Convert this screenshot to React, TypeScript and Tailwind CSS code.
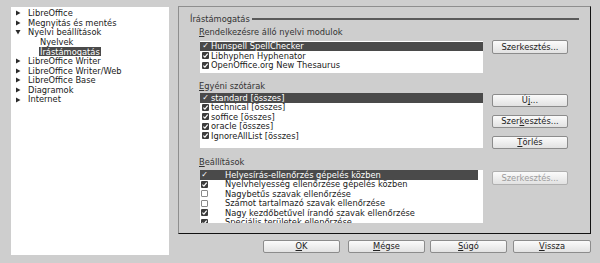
import React from "react";

function Tri({ open }: { open?: boolean }) {
  return (
    <svg width="6" height="6" viewBox="0 0 6 6" className="shrink-0">
      {open ? <polygon points="0.5,1 5.5,1 3,5.5" fill="#2a2a2a" /> : <polygon points="1,0.5 5.5,3 1,5.5" fill="#2a2a2a" />}
    </svg>
  );
}

function Box({ checked }: { checked: boolean }) {
  if (!checked) return <div className="w-[7px] h-[7px] shrink-0 border border-[#8a8a8a] bg-white rounded-[1px]" />;
  return (
    <svg width="7" height="7" viewBox="0 0 7 7" className="shrink-0">
      <rect x="0" y="0" width="7" height="7" rx="1" fill="#3c3c3c" />
      <path d="M1.4 3.6 L2.9 5.1 L5.7 1.6" stroke="#fff" strokeWidth="1.2" fill="none" />
    </svg>
  );
}

function Btn({ children, w = "w-[76px]", h = "h-[14px]", disabled }: { children: React.ReactNode; w?: string; h?: string; disabled?: boolean }) {
  return (
    <div
      className={`${w} ${h} shrink-0 flex items-center justify-center rounded-[2px] border bg-gradient-to-b from-[#fbfbfb] to-[#e2e2e2] ${
        disabled ? "border-[#b0b0b0] text-[#9c9c9c]" : "border-[#8c8c8c] text-[#222]"
      }`}
    >
      {children}
    </div>
  );
}

const U = ({ c }: { c: string }) => <span className="underline underline-offset-[1px]">{c}</span>;

function Row({ text, checked = true, sel, wide }: { text: string; checked?: boolean; sel?: boolean; wide?: boolean }) {
  return (
    <div className={`flex items-center h-[9.5px] ${sel ? "bg-[#4a4a4a] text-white" : ""} ${wide ? "pl-[1px]" : "pl-[2px]"}`}>
      {sel ? (
        <span className="w-[7px] shrink-0 text-[8px] leading-none text-center">✓</span>
      ) : (
        <Box checked={checked} />
      )}
      <span className={`whitespace-nowrap ${wide ? "ml-[17px]" : "ml-[2px]"}`}>{text}</span>
    </div>
  );
}

export default function App() {
  const tree: { t: string; lvl: number; open?: boolean; sel?: boolean }[] = [
    { t: "LibreOffice", lvl: 0 },
    { t: "Megnyitás és mentés", lvl: 0 },
    { t: "Nyelvi beállítások", lvl: 0, open: true },
    { t: "Nyelvek", lvl: 1 },
    { t: "Írástámogatás", lvl: 1, sel: true },
    { t: "LibreOffice Writer", lvl: 0 },
    { t: "LibreOffice Writer/Web", lvl: 0 },
    { t: "LibreOffice Base", lvl: 0 },
    { t: "Diagramok", lvl: 0 },
    { t: "Internet", lvl: 0 },
  ];
  return (
    <div className="w-[600px] h-[263px] bg-[#cecece] flex overflow-hidden text-[8.3px] leading-none text-[#1a1a1a] font-['DejaVu_Sans',sans-serif]">
      <div className="ml-[11px] mt-[7px] w-[158px] h-[248px] bg-white pt-[1.5px]">
        {tree.map((it) => (
          <div key={it.t} className="h-[9.6px] flex items-center">
            {it.lvl === 0 ? (
              <div className="flex items-center pl-[4px]">
                <Tri open={it.open} />
                <span className="ml-[7px] whitespace-nowrap">{it.t}</span>
              </div>
            ) : (
              <span className={`ml-[28px] whitespace-nowrap px-[1px] h-[9px] flex items-center ${it.sel ? "bg-[#4a4a4a] text-white" : ""}`}>{it.t}</span>
            )}
          </div>
        ))}
      </div>

      <div className="ml-[9px] mt-[6px] w-[413px] flex flex-col">
        <div className="h-[228px] border-t border-l border-[#8e8e8e] border-r border-r-[#111] border-b border-b-[#111] flex flex-col">
          <div className="mt-[7px] h-[10px] flex items-center pl-[11px]">
            <span className="text-[#333] whitespace-nowrap">Írástámogatás</span>
            <div className="flex-1 h-[2px] bg-[#5a5a5a] ml-[2px] mr-[11px]" />
          </div>
          <div className="pl-[20px] flex flex-col">
            <div className="mt-[3px] h-[10px] flex items-center text-[#333]">
              <span><U c="R" />endelkezésre álló nyelvi modulok</span>
            </div>
            <div className="mt-[3px] flex items-start">
              <div className="ml-[1px] mt-[1px] w-[283px] h-[32px] bg-white pt-[0.5px]">
                <Row text="Hunspell SpellChecker" sel />
                <Row text="Libhyphen Hyphenator" />
                <Row text="OpenOffice.org New Thesaurus" />
              </div>
              <div className="ml-[9px]">
                <Btn>Szerkesztés...</Btn>
              </div>
            </div>

            <div className="mt-[8px] h-[10px] flex items-center text-[#333]">
              <span><U c="E" />gyéni szótárak</span>
            </div>
            <div className="mt-[2px] flex items-start">
              <div className="ml-[1px] w-[283px] h-[55px] bg-white">
                <Row text="standard [összes]" sel />
                <Row text="technical [összes]" />
                <Row text="soffice [összes]" />
                <Row text="oracle [összes]" />
                <Row text="IgnoreAllList [összes]" />
              </div>
              <div className="ml-[9px] mt-[1px] flex flex-col gap-[8px]">
                <Btn h="h-[13px]">Ú<U c="j" />...</Btn>
                <Btn h="h-[13px]">Szer<U c="k" />esztés...</Btn>
                <Btn h="h-[13px]"><U c="T" />örlés</Btn>
              </div>
            </div>

            <div className="mt-[8px] h-[10px] flex items-center text-[#333]">
              <span><U c="B" />eállítások</span>
            </div>
            <div className="mt-[3px] flex items-start">
              <div className="ml-[1px] w-[283px] h-[53px] bg-white overflow-hidden pr-[5px]">
                <Row text="Helyesírás-ellenőrzés gépelés közben" sel wide />
                <Row text="Nyelvhelyesség ellenőrzése gépelés közben" wide />
                <Row text="Nagybetűs szavak ellenőrzése" checked={false} wide />
                <Row text="Számot tartalmazó szavak ellenőrzése" checked={false} wide />
                <Row text="Nagy kezdőbetűvel írandó szavak ellenőrzése" wide />
                <Row text="Speciális területek ellenőrzése" wide />
              </div>
              <div className="ml-[9px] mt-[1px]">
                <Btn disabled>Szerkesztés...</Btn>
              </div>
            </div>
          </div>
        </div>

        <div className="mt-[6px] flex justify-end">
          <Btn w="w-[77px]" h="h-[13px]"><U c="O" />K</Btn>
          <div className="w-[8px]" />
          <Btn w="w-[77px]" h="h-[13px]"><U c="M" />égse</Btn>
          <div className="w-[5px]" />
          <Btn w="w-[77px]" h="h-[13px]"><U c="S" />úgó</Btn>
          <div className="w-[6px]" />
          <Btn w="w-[78px]" h="h-[13px]"><U c="V" />issza</Btn>
        </div>
      </div>
    </div>
  );
}
